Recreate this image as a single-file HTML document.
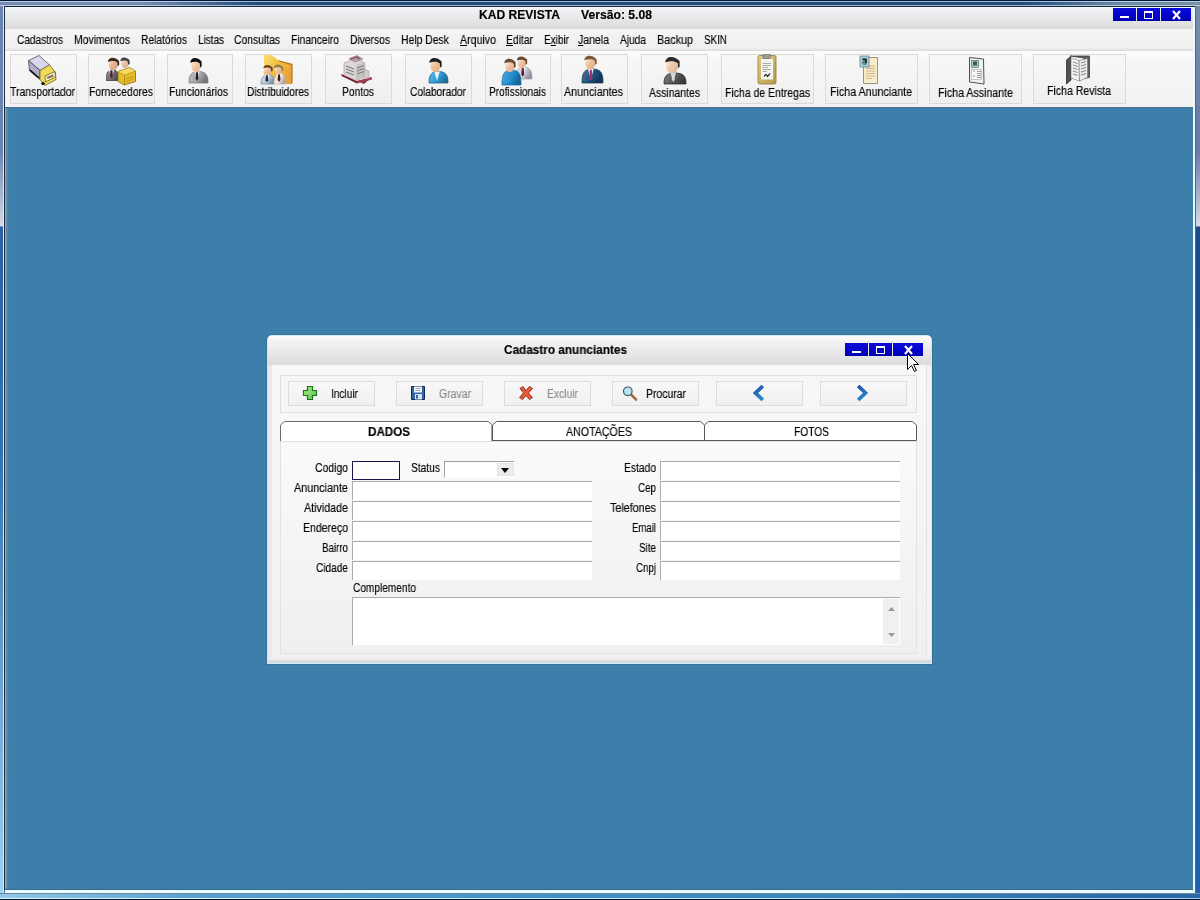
<!DOCTYPE html>
<html><head><meta charset="utf-8"><title>KAD REVISTA</title>
<style>
html,body{margin:0;padding:0;width:1200px;height:900px;overflow:hidden;position:relative;font-family:"Liberation Sans",sans-serif;}
.t{position:absolute;white-space:nowrap;transform-origin:0 0;will-change:transform;-webkit-text-stroke:0.15px currentColor;}
u{text-decoration:underline;text-underline-offset:1px;}
</style></head><body>
<div style="position:absolute;left:0px;top:0px;width:1200px;height:900px;background:#3d7fab;"></div>
<div style="position:absolute;left:0px;top:0px;width:3px;height:900px;background:linear-gradient(180deg,#6a84b0 0px,#6a84b0 150px,#d0d8e8 224px,#d0d8e8 226px,#2a62a2 227px,#3272b0 450px,#98d0f0 885px,#a8d8f4 900px);"></div>
<div style="position:absolute;left:1196px;top:0px;width:4px;height:900px;background:linear-gradient(180deg,#7890a8 0px,#6878a8 150px,#d0d8e8 224px,#d0d8e8 226px,#1a4a88 227px,#1e56a0 600px,#2262aa 900px);"></div>
<div style="position:absolute;left:0px;top:0px;width:1200px;height:7px;background:linear-gradient(90deg,#7a8cab 0px,#7a8cab 140px,#214a78 260px,#214a78 1020px,#6d8aa0 1120px,#7890a0 1200px);"></div>
<div style="position:absolute;left:0px;top:0px;width:1200px;height:1px;background:#04183a;"></div>
<div style="position:absolute;left:0px;top:1px;width:1200px;height:1px;background:rgba(200,225,255,0.75);"></div>
<div style="position:absolute;left:0px;top:5px;width:1200px;height:1px;background:rgba(200,225,255,0.75);"></div>
<div style="position:absolute;left:4px;top:6px;width:1192px;height:1px;background:#182838;"></div>
<div style="position:absolute;left:3px;top:6px;width:1px;height:888px;background:#d8ecf8;"></div>
<div style="position:absolute;left:4px;top:6px;width:1px;height:884px;background:#1c2c3c;"></div>
<div style="position:absolute;left:5px;top:108px;width:1px;height:781px;background:#90a8b8;"></div>
<div style="position:absolute;left:1193px;top:7px;width:2px;height:886px;background:#e8fcff;"></div>
<div style="position:absolute;left:1195px;top:6px;width:1px;height:888px;background:#506878;"></div>
<div style="position:absolute;left:0px;top:893px;width:1200px;height:1px;background:#6a8aa0;"></div>
<div style="position:absolute;left:0px;top:894px;width:1200px;height:4px;background:linear-gradient(90deg,#90c8e8 0px,#58a0d0 200px,#4090c4 600px,#3a80bc 900px,#2a68a8 1150px,#2a68a8 1200px);"></div>
<div style="position:absolute;left:0px;top:898px;width:1200px;height:1px;background:linear-gradient(90deg,#e0f4ff 0px,#c8ecff 600px,#a8d0f0 1200px);"></div>
<div style="position:absolute;left:0px;top:899px;width:1200px;height:1px;background:#021428;"></div>
<div style="position:absolute;left:5px;top:7px;width:1188px;height:22px;background:linear-gradient(180deg,#f6f9fc 0px,#eef0f2 3px,#e2e2e2 16px,#dadada 22px);"></div>
<div class="t" style="left:479.00px;top:8.84px;font-size:12px;line-height:12px;color:#000;font-weight:bold;transform:scaleX(1.0068);">KAD REVISTA</div>
<div class="t" style="left:581.00px;top:8.84px;font-size:12px;line-height:12px;color:#000;font-weight:bold;transform:scaleX(1.0135);">Versão: 5.08</div>
<div style="position:absolute;left:1113px;top:8px;width:23px;height:13px;background:linear-gradient(180deg,#0c0cd8 0%,#0606d0 45%,#0000b0 100%);"></div>
<div style="position:absolute;left:1120px;top:16px;width:9px;height:2px;background:#fff;"></div>
<div style="position:absolute;left:1137px;top:8px;width:23px;height:13px;background:linear-gradient(180deg,#0c0cd8 0%,#0606d0 45%,#0000b0 100%);"></div>
<div style="position:absolute;left:1144px;top:11px;width:9px;height:8px;border:1px solid #fff;border-top-width:2px;box-sizing:border-box;"></div>
<div style="position:absolute;left:1161px;top:8px;width:30px;height:13px;background:linear-gradient(180deg,#0c0cd8 0%,#0606d0 45%,#0000b0 100%);"></div>
<svg style="position:absolute;left:1172px;top:10px" width="9" height="10" viewBox="0 0 9 10"><path d="M1 1L8 9M8 1L1 9" stroke="#fff" stroke-width="2.1" stroke-linecap="butt"/></svg>
<div style="position:absolute;left:5px;top:29px;width:1188px;height:21px;background:linear-gradient(180deg,#f4f4f4,#eeeeee);"></div>
<div style="position:absolute;left:5px;top:49px;width:1188px;height:2px;background:linear-gradient(180deg,#e6e6e6,#dadada);"></div>
<div class="t" style="left:17.00px;top:33.84px;font-size:12px;line-height:12px;color:#000;transform:scaleX(0.8406);">Cadastros</div>
<div class="t" style="left:74.00px;top:33.84px;font-size:12px;line-height:12px;color:#000;transform:scaleX(0.8658);">Movimentos</div>
<div class="t" style="left:141.00px;top:33.84px;font-size:12px;line-height:12px;color:#000;transform:scaleX(0.8519);">Relatórios</div>
<div class="t" style="left:198.00px;top:33.84px;font-size:12px;line-height:12px;color:#000;transform:scaleX(0.8301);">Listas</div>
<div class="t" style="left:234.00px;top:33.84px;font-size:12px;line-height:12px;color:#000;transform:scaleX(0.8624);">Consultas</div>
<div class="t" style="left:291.00px;top:33.84px;font-size:12px;line-height:12px;color:#000;transform:scaleX(0.8565);">Financeiro</div>
<div class="t" style="left:350.00px;top:33.84px;font-size:12px;line-height:12px;color:#000;transform:scaleX(0.8569);">Diversos</div>
<div class="t" style="left:401.00px;top:33.84px;font-size:12px;line-height:12px;color:#000;transform:scaleX(0.8658);">Help Desk</div>
<div class="t" style="left:460.00px;top:33.84px;font-size:12px;line-height:12px;color:#000;transform:scaleX(0.8850);"><u>A</u>rquivo</div>
<div class="t" style="left:506.00px;top:33.84px;font-size:12px;line-height:12px;color:#000;transform:scaleX(0.8621);"><u>E</u>ditar</div>
<div class="t" style="left:544.00px;top:33.84px;font-size:12px;line-height:12px;color:#000;transform:scaleX(0.8333);">E<u>x</u>ibir</div>
<div class="t" style="left:578.00px;top:33.84px;font-size:12px;line-height:12px;color:#000;transform:scaleX(0.8757);"><u>J</u>anela</div>
<div class="t" style="left:620.00px;top:33.84px;font-size:12px;line-height:12px;color:#000;transform:scaleX(0.8464);">Ajuda</div>
<div class="t" style="left:657.00px;top:33.84px;font-size:12px;line-height:12px;color:#000;transform:scaleX(0.8996);">Backup</div>
<div class="t" style="left:704.00px;top:33.84px;font-size:12px;line-height:12px;color:#000;transform:scaleX(0.8208);">SKIN</div>
<div style="position:absolute;left:5px;top:51px;width:1188px;height:56px;background:linear-gradient(180deg,#fdfdfd 0px,#f6f6f6 10px,#f3f3f3 48px,#f2f2f6 56px);"></div>
<div style="position:absolute;left:5px;top:107px;width:1188px;height:1px;background:#4a6a88;"></div>
<div style="position:absolute;left:10px;top:54px;width:67px;height:50px;box-sizing:border-box;border:1px solid #dadada;background:linear-gradient(180deg,#f8f8f8,#efefef);"></div>
<div class="t" style="left:10.00px;top:85.84px;font-size:12px;line-height:12px;color:#000;transform:scaleX(0.8674);">Transportador</div>
<div style="position:absolute;left:88px;top:54px;width:67px;height:50px;box-sizing:border-box;border:1px solid #dadada;background:linear-gradient(180deg,#f8f8f8,#efefef);"></div>
<div class="t" style="left:89.00px;top:85.84px;font-size:12px;line-height:12px;color:#000;transform:scaleX(0.8644);">Fornecedores</div>
<div style="position:absolute;left:167px;top:54px;width:66px;height:50px;box-sizing:border-box;border:1px solid #dadada;background:linear-gradient(180deg,#f8f8f8,#efefef);"></div>
<div class="t" style="left:169.00px;top:85.84px;font-size:12px;line-height:12px;color:#000;transform:scaleX(0.8588);">Funcionários</div>
<div style="position:absolute;left:245px;top:54px;width:67px;height:50px;box-sizing:border-box;border:1px solid #dadada;background:linear-gradient(180deg,#f8f8f8,#efefef);"></div>
<div class="t" style="left:247.00px;top:85.84px;font-size:12px;line-height:12px;color:#000;transform:scaleX(0.8449);">Distribuidores</div>
<div style="position:absolute;left:325px;top:54px;width:67px;height:50px;box-sizing:border-box;border:1px solid #dadada;background:linear-gradient(180deg,#f8f8f8,#efefef);"></div>
<div class="t" style="left:342.00px;top:85.84px;font-size:12px;line-height:12px;color:#000;transform:scaleX(0.8561);">Pontos</div>
<div style="position:absolute;left:405px;top:54px;width:67px;height:50px;box-sizing:border-box;border:1px solid #dadada;background:linear-gradient(180deg,#f8f8f8,#efefef);"></div>
<div class="t" style="left:410.00px;top:85.84px;font-size:12px;line-height:12px;color:#000;transform:scaleX(0.8477);">Colaborador</div>
<div style="position:absolute;left:485px;top:54px;width:66px;height:50px;box-sizing:border-box;border:1px solid #dadada;background:linear-gradient(180deg,#f8f8f8,#efefef);"></div>
<div class="t" style="left:489.00px;top:85.84px;font-size:12px;line-height:12px;color:#000;transform:scaleX(0.8377);">Profissionais</div>
<div style="position:absolute;left:561px;top:54px;width:67px;height:50px;box-sizing:border-box;border:1px solid #dadada;background:linear-gradient(180deg,#f8f8f8,#efefef);"></div>
<div class="t" style="left:564.00px;top:85.84px;font-size:12px;line-height:12px;color:#000;transform:scaleX(0.8931);">Anunciantes</div>
<div style="position:absolute;left:641px;top:54px;width:67px;height:50px;box-sizing:border-box;border:1px solid #dadada;background:linear-gradient(180deg,#f8f8f8,#efefef);"></div>
<div class="t" style="left:649.00px;top:86.84px;font-size:12px;line-height:12px;color:#000;transform:scaleX(0.8691);">Assinantes</div>
<div style="position:absolute;left:721px;top:54px;width:93px;height:50px;box-sizing:border-box;border:1px solid #dadada;background:linear-gradient(180deg,#f8f8f8,#efefef);"></div>
<div class="t" style="left:725.00px;top:86.84px;font-size:12px;line-height:12px;color:#000;transform:scaleX(0.8729);">Ficha de Entregas</div>
<div style="position:absolute;left:825px;top:54px;width:93px;height:50px;box-sizing:border-box;border:1px solid #dadada;background:linear-gradient(180deg,#f8f8f8,#efefef);"></div>
<div class="t" style="left:830.00px;top:85.84px;font-size:12px;line-height:12px;color:#000;transform:scaleX(0.8909);">Ficha Anunciante</div>
<div style="position:absolute;left:929px;top:54px;width:93px;height:50px;box-sizing:border-box;border:1px solid #dadada;background:linear-gradient(180deg,#f8f8f8,#efefef);"></div>
<div class="t" style="left:938.00px;top:86.84px;font-size:12px;line-height:12px;color:#000;transform:scaleX(0.8853);">Ficha Assinante</div>
<div style="position:absolute;left:1033px;top:54px;width:93px;height:50px;box-sizing:border-box;border:1px solid #dadada;background:linear-gradient(180deg,#f8f8f8,#efefef);"></div>
<div class="t" style="left:1047.00px;top:84.84px;font-size:12px;line-height:12px;color:#000;transform:scaleX(0.8801);">Ficha Revista</div>
<svg style="position:absolute;left:24px;top:52px" width="36" height="36" viewBox="0 0 36 36">
<path d="M4.5 8.5 L15 3.5 L25.5 13 L16 18.5 Z" fill="#d8d8ea" stroke="#505060" stroke-width="0.8"/>
<path d="M4.5 8.5 L16 18.5 L16 27.5 L5.5 19 Z" fill="#b0b0c8" stroke="#404050" stroke-width="0.8"/>
<path d="M16 18.5 L25.5 13 L31.5 20.5 L32 27.5 L21 33.5 L16 27.5 Z" fill="#f0dc58" stroke="#706020" stroke-width="0.8"/>
<path d="M21 24 L31 19.5 L31.5 25 L21.5 30 Z" fill="#f4f0c0" stroke="#604820" stroke-width="0.7"/>
<path d="M23 25 L29 22.5 L29.5 24.5 L23.5 27 Z" fill="#806860"/>
<path d="M6 18 L15 26" stroke="#101010" stroke-width="1.6"/>
<ellipse cx="19" cy="31.5" rx="1.8" ry="1.5" fill="#101010"/>
</svg>
<svg style="position:absolute;left:106px;top:52px" width="36" height="36" viewBox="0 0 36 36"><defs><linearGradient id="fg1" x1="0" y1="0" x2="1" y2="1"><stop offset="0" stop-color="#fbf6f0"/><stop offset="0.45" stop-color="#e9b395"/><stop offset="1" stop-color="#d09e81"/></linearGradient><linearGradient id="bg1" x1="0" y1="0" x2="1" y2="0.4"><stop offset="0" stop-color="#93938d"/><stop offset="0.6" stop-color="#707068"/><stop offset="1" stop-color="#4e4e48"/></linearGradient></defs><path d="M0 28.5 C-0.3 20.5 3 17.5 6.5 17.5 C10 17.5 13.3 20.5 13 28.5 Z" fill="url(#bg1)" stroke="#303030" stroke-width="0.7"/><path d="M2.66 17.5 L5.46 26.3 L8.26 17.5 Z" fill="#f0f0f0"/><path d="M4.46 18.3 L6.46 18.3 L6.859999999999999 24.1 L5.46 26.52 L4.0600000000000005 24.1 Z" fill="#4a1a40"/><ellipse cx="7.3" cy="12.54" rx="4.699999999999999" ry="5.72" fill="url(#fg1)"/><path d="M1.9 9.940000000000001 C1.7 5.26 8.5 3.8 13.1 8.9 L13.2 13.06 L11.7 14.36 L11.3 10.46 C8.5 8.379999999999999 5.0 8.9 1.9 9.940000000000001 Z" fill="#3a2a20"/><defs><linearGradient id="fg2" x1="0" y1="0" x2="1" y2="1"><stop offset="0" stop-color="#fbf6f0"/><stop offset="0.45" stop-color="#e9c3a4"/><stop offset="1" stop-color="#d0ac90"/></linearGradient><linearGradient id="bg2" x1="0" y1="0" x2="1" y2="0.4"><stop offset="0" stop-color="#a7a79f"/><stop offset="0.6" stop-color="#8a8a80"/><stop offset="1" stop-color="#606059"/></linearGradient></defs><ellipse cx="18.84" cy="11.379999999999999" rx="3.76" ry="4.84" fill="url(#fg2)"/><path d="M14.4 9.18 C14.2 5.22 19.8 3.8 23.6 8.3 L23.7 11.82 L22.2 12.92 L21.8 9.620000000000001 C19.8 7.86 17.0 8.3 14.4 9.18 Z" fill="#404040"/><path d="M12 19.5 L23.5 15.5 L29.5 19 L29.5 29.5 L18.5 33 L12 29.5 Z" fill="#e6bc28" stroke="#8a6a10" stroke-width="0.8"/><path d="M12 19.5 L18.5 23 L29.5 19 M18.5 23 V33" stroke="#a88418" stroke-width="0.8" fill="none"/><path d="M12.3 19.7 L23.5 15.8 L29.2 19 L18.5 22.8 Z" fill="#f4d860"/><path d="M20 27 L27.5 24.5 M20 29.5 L27.5 27" stroke="#b89020" stroke-width="0.8"/></svg>
<svg style="position:absolute;left:180px;top:52px" width="36" height="36" viewBox="0 0 36 36"><defs><linearGradient id="fg3" x1="0" y1="0" x2="1" y2="1"><stop offset="0" stop-color="#fbf6f0"/><stop offset="0.45" stop-color="#f4caa4"/><stop offset="1" stop-color="#dbb490"/></linearGradient><linearGradient id="bg3" x1="0" y1="0" x2="1" y2="0.4"><stop offset="0" stop-color="#bdbdbd"/><stop offset="0.6" stop-color="#a8a8a8"/><stop offset="1" stop-color="#757575"/></linearGradient></defs><path d="M9 31.0 C8.7 22.5 12 19.5 18.5 19.5 C25 19.5 28.3 22.5 28 31.0 Z" fill="url(#bg3)" stroke="#707070" stroke-width="0.7"/><path d="M14.18 19.5 L16.98 28.700000000000003 L19.78 19.5 Z" fill="#e8e8f0"/><path d="M15.98 20.3 L17.98 20.3 L18.38 26.4 L16.98 28.93 L15.58 26.4 Z" fill="#202030"/><ellipse cx="15.8" cy="13.7" rx="4.699999999999999" ry="6.6" fill="url(#fg3)"/><path d="M10.4 10.7 C10.2 5.3 17.0 3.8 21.6 9.5 L21.7 14.3 L20.2 15.799999999999999 L19.8 11.3 C17.0 8.9 13.5 9.5 10.4 10.7 Z" fill="#101010"/></svg>
<svg style="position:absolute;left:258px;top:52px" width="36" height="36" viewBox="0 0 36 36">
<defs><linearGradient id="foldg" x1="0" y1="0" x2="1" y2="0.6"><stop offset="0" stop-color="#fae070"/><stop offset="0.5" stop-color="#f2c040"/><stop offset="1" stop-color="#e8a030"/></linearGradient></defs>
<path d="M6 3 L13 3 L21 8.5 L34 12 L34 32 L6 32 Z" fill="url(#foldg)"/>
<path d="M21 9 L34 12.5 L34 31.5" fill="none" stroke="#a87018" stroke-width="1.1"/>
<defs><linearGradient id="fg4" x1="0" y1="0" x2="1" y2="1"><stop offset="0" stop-color="#fbf6f0"/><stop offset="0.45" stop-color="#f0c39d"/><stop offset="1" stop-color="#d8ac88"/></linearGradient><linearGradient id="bg4" x1="0" y1="0" x2="1" y2="0.4"><stop offset="0" stop-color="#c9d8e7"/><stop offset="0.6" stop-color="#b8cce0"/><stop offset="1" stop-color="#808e9c"/></linearGradient></defs><path d="M3 32.0 C2.7 25.5 6 22.5 10.0 22.5 C14 22.5 17.3 25.5 17 32.0 Z" fill="url(#bg4)" stroke="#7888a0" stroke-width="0.7"/><path d="M6.079999999999999 22.5 L8.879999999999999 30.1 L11.68 22.5 Z" fill="#f0f0f0"/><path d="M7.879999999999999 23.3 L9.879999999999999 23.3 L10.28 28.2 L8.879999999999999 30.29 L7.479999999999999 28.2 Z" fill="#203040"/><ellipse cx="9.84" cy="18.3" rx="3.76" ry="4.4" fill="url(#fg4)"/><path d="M5.4 16.3 C5.2 12.7 10.8 11.3 14.6 15.5 L14.7 18.7 L13.2 19.7 L12.8 16.7 C10.8 15.1 8.0 15.5 5.4 16.3 Z" fill="#6a4020"/><defs><linearGradient id="fg5" x1="0" y1="0" x2="1" y2="1"><stop offset="0" stop-color="#fbf6f0"/><stop offset="0.45" stop-color="#f0c39d"/><stop offset="1" stop-color="#d8ac88"/></linearGradient><linearGradient id="bg5" x1="0" y1="0" x2="1" y2="0.4"><stop offset="0" stop-color="#f6eae4"/><stop offset="0.6" stop-color="#f4e4dc"/><stop offset="1" stop-color="#aa9f9a"/></linearGradient></defs><path d="M16 32.0 C15.7 24.5 19 21.5 22.0 21.5 C25 21.5 28.3 24.5 28 32.0 Z" fill="url(#bg5)" stroke="#c8b0a8" stroke-width="0.7"/><path d="M18.24 21.5 L21.04 29.9 L23.84 21.5 Z" fill="#ffffff"/><path d="M20.04 22.3 L22.04 22.3 L22.439999999999998 27.8 L21.04 30.11 L19.64 27.8 Z" fill="#302020"/><ellipse cx="20.34" cy="18.09" rx="3.76" ry="4.62" fill="url(#fg5)"/><path d="M15.9 15.99 C15.7 12.21 21.3 10.8 25.1 15.15 L25.2 18.509999999999998 L23.7 19.56 L23.3 16.41 C21.3 14.73 18.5 15.15 15.9 15.99 Z" fill="#9a7850"/></svg>
<svg style="position:absolute;left:338px;top:52px" width="36" height="36" viewBox="0 0 36 36">
<path d="M3 22 L19 29 L34 25 L26 32 Z" fill="#8a3040"/>
<path d="M3.5 22 L19 29 L19 31.5 L3.5 24 Z" fill="#702030"/>
<path d="M19 29 L34 25.5 L34 27.5 L19 31.5 Z" fill="#a04050"/>
<path d="M6 11 L17 6 L27 11 L27 25 L18 28.5 L6 23 Z" fill="#ded6d6" stroke="#a89098" stroke-width="0.6"/>
<path d="M18 13 L27 10 L27 25 L18 28.5 Z" fill="#c8c2c2"/>
<path d="M11 6.5 L19 3.5 L25 7 L17 10 Z" fill="#b8a0a8" stroke="#8a6a78" stroke-width="0.5"/>
<path d="M12 7.5 L19 5 L22 7" stroke="#7a4a58" stroke-width="1.2" fill="none"/>
<path d="M8 14 L16 17 M8 17 L16 20 M8 20 L16 23 M19 16 L26 13.5 M19 19 L26 16.5 M19 22 L26 19.5" stroke="#7a8080" stroke-width="1.1"/>
<path d="M26 17 L31 19 L31 26 L26 27 Z" fill="#d0caca" stroke="#a89098" stroke-width="0.5"/>
</svg>
<svg style="position:absolute;left:420px;top:52px" width="36" height="36" viewBox="0 0 36 36"><defs><linearGradient id="fg6" x1="0" y1="0" x2="1" y2="1"><stop offset="0" stop-color="#fbf6f0"/><stop offset="0.45" stop-color="#f2c395"/><stop offset="1" stop-color="#d9ac81"/></linearGradient><linearGradient id="bg6" x1="0" y1="0" x2="1" y2="0.4"><stop offset="0" stop-color="#5fb7e4"/><stop offset="0.6" stop-color="#2aa0dc"/><stop offset="1" stop-color="#1d709a"/></linearGradient></defs><path d="M9 31.0 C8.7 22.5 12 19.5 18.5 19.5 C25 19.5 28.3 22.5 28 31.0 Z" fill="url(#bg6)" stroke="#1a5080" stroke-width="0.7"/><path d="M14.18 19.5 L16.98 28.700000000000003 L19.78 19.5 Z" fill="#f0f0f0"/><ellipse cx="15.28" cy="13.7" rx="5.17" ry="6.6" fill="url(#fg6)"/><path d="M9.4 10.7 C9.2 5.3 16.6 3.8 21.6 9.5 L21.7 14.3 L20.2 15.799999999999999 L19.8 11.3 C16.6 8.9 12.75 9.5 9.4 10.7 Z" fill="#202020"/></svg>
<svg style="position:absolute;left:498px;top:52px" width="36" height="36" viewBox="0 0 36 36"><defs><linearGradient id="fg7" x1="0" y1="0" x2="1" y2="1"><stop offset="0" stop-color="#fbf6f0"/><stop offset="0.45" stop-color="#f0c3a4"/><stop offset="1" stop-color="#d8ac90"/></linearGradient><linearGradient id="bg7" x1="0" y1="0" x2="1" y2="0.4"><stop offset="0" stop-color="#dbdbe7"/><stop offset="0.6" stop-color="#d0d0e0"/><stop offset="1" stop-color="#91919c"/></linearGradient></defs><path d="M18 27 C17.7 18 21 15 26.0 15 C31 15 34.3 18 34 27 Z" fill="url(#bg7)" stroke="#a0a0b0" stroke-width="0.7"/><path d="M21.919999999999998 15 L24.72 24.6 L27.52 15 Z" fill="#f8f8f8"/><path d="M23.72 15.8 L25.72 15.8 L26.119999999999997 22.2 L24.72 24.84 L23.32 22.2 Z" fill="#6a1a30"/><ellipse cx="23.82" cy="10.959999999999999" rx="4.2299999999999995" ry="5.28" fill="url(#fg7)"/><path d="M18.9 8.56 C18.7 4.24 24.9 2.8 29.1 7.6 L29.2 11.44 L27.7 12.64 L27.3 9.04 C24.9 7.12 21.75 7.6 18.9 8.56 Z" fill="#6a4a30"/><defs><linearGradient id="fg8" x1="0" y1="0" x2="1" y2="1"><stop offset="0" stop-color="#fbf6f0"/><stop offset="0.45" stop-color="#f0c3a4"/><stop offset="1" stop-color="#d8ac90"/></linearGradient><linearGradient id="bg8" x1="0" y1="0" x2="1" y2="0.4"><stop offset="0" stop-color="#57abdb"/><stop offset="0.6" stop-color="#2090d0"/><stop offset="1" stop-color="#166491"/></linearGradient></defs><path d="M4 33 C3.7 21 7 18 13.5 18 C20 18 23.3 21 23 33 Z" fill="url(#bg8)" stroke="#1a60a0" stroke-width="0.7"/><path d="M9.18 18 L11.98 30.0 L14.780000000000001 18 Z" fill="#2a90d0"/><ellipse cx="11.8" cy="14.12" rx="4.699999999999999" ry="6.16" fill="url(#fg8)"/><path d="M6.4 11.32 C6.2 6.28 13.0 4.8 17.6 10.2 L17.7 14.68 L16.2 16.08 L15.8 11.879999999999999 C13.0 9.64 9.5 10.2 6.4 11.32 Z" fill="#6a4a30"/></svg>
<svg style="position:absolute;left:576px;top:52px" width="36" height="36" viewBox="0 0 36 36"><defs><linearGradient id="fg9" x1="0" y1="0" x2="1" y2="1"><stop offset="0" stop-color="#fbf6f0"/><stop offset="0.45" stop-color="#f0c39d"/><stop offset="1" stop-color="#d8ac88"/></linearGradient><linearGradient id="bg9" x1="0" y1="0" x2="1" y2="0.4"><stop offset="0" stop-color="#567a9f"/><stop offset="0.6" stop-color="#1e4e80"/><stop offset="1" stop-color="#153659"/></linearGradient></defs><path d="M6 31 C5.7 20 9 17 16.5 17 C24 17 27.3 20 27 31 Z" fill="url(#bg9)" stroke="#10304a" stroke-width="0.7"/><path d="M12.02 17 L14.82 28.200000000000003 L17.62 17 Z" fill="#f0f0f0"/><path d="M13.82 17.8 L15.82 17.8 L16.22 25.4 L14.82 28.479999999999997 L13.42 25.4 Z" fill="#a03070"/><ellipse cx="14.28" cy="11.12" rx="5.17" ry="6.16" fill="url(#fg9)"/><path d="M8.4 8.32 C8.2 3.2800000000000002 15.6 1.8 20.6 7.2 L20.7 11.68 L19.2 13.08 L18.8 8.879999999999999 C15.6 6.640000000000001 11.75 7.2 8.4 8.32 Z" fill="#7a5a38"/></svg>
<svg style="position:absolute;left:656px;top:52px" width="36" height="36" viewBox="0 0 36 36"><defs><linearGradient id="fg10" x1="0" y1="0" x2="1" y2="1"><stop offset="0" stop-color="#fbf6f0"/><stop offset="0.45" stop-color="#f0caac"/><stop offset="1" stop-color="#d8b497"/></linearGradient><linearGradient id="bg10" x1="0" y1="0" x2="1" y2="0.4"><stop offset="0" stop-color="#818181"/><stop offset="0.6" stop-color="#585858"/><stop offset="1" stop-color="#3d3d3d"/></linearGradient></defs><path d="M8 32 C7.7 24 11 21 19.0 21 C27 21 30.3 24 30 32 Z" fill="url(#bg10)" stroke="#202020" stroke-width="0.7"/><path d="M14.440000000000001 21 L17.240000000000002 29.8 L20.040000000000003 21 Z" fill="#d8d8e0"/><path d="M16.240000000000002 21.8 L18.240000000000002 21.8 L18.64 27.6 L17.240000000000002 30.02 L15.840000000000002 27.6 Z" fill="#d8d8e0"/><ellipse cx="16.240000000000002" cy="13.86" rx="6.109999999999999" ry="7.48" fill="url(#fg10)"/><path d="M9.4 10.46 C9.2 4.34 17.8 2.8 23.6 9.1 L23.7 14.54 L22.2 16.240000000000002 L21.8 11.14 C17.8 8.42 13.25 9.1 9.4 10.46 Z" fill="#2a2a2a"/></svg>
<svg style="position:absolute;left:750px;top:50px" width="36" height="36" viewBox="0 0 36 36">
<defs><linearGradient id="clipg" x1="0" y1="0" x2="1" y2="1"><stop offset="0" stop-color="#e0d088"/><stop offset="1" stop-color="#b89848"/></linearGradient></defs>
<rect x="8" y="5.5" width="18" height="28.5" rx="1.5" fill="url(#clipg)" stroke="#8a7838" stroke-width="0.8"/>
<rect x="11" y="9" width="12" height="20.5" fill="#f4f4f0"/>
<rect x="13" y="4.5" width="7" height="4" fill="#9a9a9a" stroke="#606060" stroke-width="0.5"/>
<path d="M12.5 13.5 H21 M12.5 15.5 H21 M12.5 17.5 H18 M12.5 19.5 H21 M12.5 21.5 H17" stroke="#888" stroke-width="0.7"/>
<path d="M14 26.5 L16 24.5 L17.5 26.5 L20 23.5" stroke="#303030" stroke-width="1.2" fill="none"/>
</svg>
<svg style="position:absolute;left:852px;top:50px" width="36" height="36" viewBox="0 0 36 36">
<path d="M11.5 7.5 H25.5 V33.5 H11.5 Z" fill="#f6eccc" stroke="#908878" stroke-width="0.9"/>
<path d="M14 16 H23 M14 18.5 H23 M14 21 H23 M14 23.5 H23 M14 26 H23 M14 28.5 H20" stroke="#d0b080" stroke-width="0.9"/>
<rect x="8" y="6" width="9" height="11" fill="#a8ccd4" stroke="#6a8890" stroke-width="0.8"/>
<circle cx="12.5" cy="12.5" r="2.5" fill="#5a8890"/>
<path d="M10.5 9.2 H14 V13" stroke="#101820" stroke-width="1.5" fill="none"/>
</svg>
<svg style="position:absolute;left:958px;top:50px" width="36" height="36" viewBox="0 0 36 36">
<path d="M11.5 7.5 L25.5 9 L26 34 L11.5 32 Z" fill="#eef2f2" stroke="#4a5050" stroke-width="1"/>
<rect x="13.5" y="10.5" width="7" height="7" fill="#a8c8c8" stroke="#506868" stroke-width="0.6"/>
<rect x="15" y="11.5" width="4" height="4" fill="#405858"/>
<rect x="13.5" y="19.5" width="10" height="10" fill="#f8f8f8" stroke="#909898" stroke-width="0.5"/>
<path d="M19 21.5 H23 M19 23.5 H23 M19 25.5 H23 M19 27.5 H23 M15 21 H17 M15 26 H17" stroke="#8a9090" stroke-width="0.9"/>
</svg>
<svg style="position:absolute;left:1062px;top:50px" width="36" height="36" viewBox="0 0 36 36">
<path d="M8 6 H27.5 V27.5 L22 28.5 V8 Z" fill="#606060" stroke="#404040" stroke-width="0.8"/>
<path d="M4.5 10 L8.5 6.5 L9 30 L4.5 34 Z" fill="#505050" stroke="#303030" stroke-width="0.8"/>
<path d="M9 8 L17 10.5 L17.5 31 L9 28 Z" fill="#f4f4f4" stroke="#707070" stroke-width="0.6"/>
<path d="M17 10.5 L25.5 8.5 L25.5 27.5 L17.5 31 Z" fill="#ececec" stroke="#707070" stroke-width="0.6"/>
<path d="M11 12 L15.5 13.5 M11 15 L15.5 16.5 M11 18 L15.5 19.5 M11 21 L15.5 22.5 M11 24 L15.5 25.5 M19 13 L24 11.5 M19 16 L24 14.5 M19 19 L24 17.5 M19 22 L24 20.5 M19 25 L24 23.5" stroke="#909090" stroke-width="1.1"/>
</svg>
<div style="position:absolute;left:6px;top:108px;width:1187px;height:781px;background:linear-gradient(90deg,#6a8ca8 0px,#3d7fab 3px);"></div>
<div style="position:absolute;left:5px;top:889px;width:1188px;height:1px;background:#3a6a88;"></div>
<div style="position:absolute;left:5px;top:890px;width:1190px;height:3px;background:#e8fcff;"></div>
<div style="position:absolute;left:267px;top:335px;width:665px;height:329px;border-radius:5px 5px 0 0;background:#c8ecf8;box-shadow:0 0 0 1px rgba(40,70,90,0.22);"></div>
<div style="position:absolute;left:268px;top:336px;width:663px;height:327px;border-radius:4px 4px 0 0;background:#f0f0f0;"></div>
<div style="position:absolute;left:268px;top:336px;width:663px;height:29px;border-radius:4px 4px 0 0;background:linear-gradient(180deg,#fbfdff 0px,#f2f2f2 6px,#e4e4e4 20px,#dcdcdc 28px);"></div>
<div style="position:absolute;left:268px;top:365px;width:663px;height:298px;background:linear-gradient(180deg,#f8f8f8,#f0f0f0);"></div>
<div style="position:absolute;left:268px;top:365px;width:4px;height:298px;background:#f6f4f4;"></div>
<div style="position:absolute;left:268px;top:365px;width:1px;height:298px;background:#e2eaf0;"></div>
<div style="position:absolute;left:269px;top:365px;width:3px;height:298px;background:#ede9e9;"></div>
<div style="position:absolute;left:926px;top:365px;width:1px;height:292px;background:#e4e4e4;"></div>
<div style="position:absolute;left:927px;top:365px;width:4px;height:298px;background:#f4f4f4;"></div>
<div style="position:absolute;left:268px;top:657px;width:663px;height:3px;background:#eeeeee;"></div>
<div style="position:absolute;left:268px;top:660px;width:663px;height:3px;background:#d8dadd;"></div>
<div class="t" style="left:504.00px;top:343.84px;font-size:12px;line-height:12px;color:#000;font-weight:bold;transform:scaleX(0.9809);">Cadastro anunciantes</div>
<div style="position:absolute;left:845px;top:343px;width:23px;height:13px;background:linear-gradient(180deg,#0c0cd8 0%,#0606d0 45%,#0000b0 100%);"></div>
<div style="position:absolute;left:852px;top:351px;width:9px;height:2px;background:#fff;"></div>
<div style="position:absolute;left:869px;top:343px;width:23px;height:13px;background:linear-gradient(180deg,#0c0cd8 0%,#0606d0 45%,#0000b0 100%);"></div>
<div style="position:absolute;left:876px;top:346px;width:9px;height:8px;border:1px solid #fff;border-top-width:2px;box-sizing:border-box;"></div>
<div style="position:absolute;left:893px;top:343px;width:30px;height:13px;background:linear-gradient(180deg,#0c0cd8 0%,#0606d0 45%,#0000b0 100%);"></div>
<svg style="position:absolute;left:904px;top:345px" width="9" height="10" viewBox="0 0 9 10"><path d="M1 1L8 9M8 1L1 9" stroke="#fff" stroke-width="2.1" stroke-linecap="butt"/></svg>
<div style="position:absolute;left:280px;top:375px;width:637px;height:38px;box-sizing:border-box;border:1px solid #dedede;background:#f6f6f6;"></div>
<div style="position:absolute;left:288px;top:381px;width:87px;height:25px;box-sizing:border-box;border:1px solid #dcdcdc;background:linear-gradient(180deg,#f8f8f8,#f0f0f0);"></div>
<div style="position:absolute;left:396px;top:381px;width:87px;height:25px;box-sizing:border-box;border:1px solid #dcdcdc;background:linear-gradient(180deg,#f8f8f8,#f0f0f0);"></div>
<div style="position:absolute;left:504px;top:381px;width:87px;height:25px;box-sizing:border-box;border:1px solid #dcdcdc;background:linear-gradient(180deg,#f8f8f8,#f0f0f0);"></div>
<div style="position:absolute;left:612px;top:381px;width:87px;height:25px;box-sizing:border-box;border:1px solid #dcdcdc;background:linear-gradient(180deg,#f8f8f8,#f0f0f0);"></div>
<div style="position:absolute;left:716px;top:381px;width:87px;height:25px;box-sizing:border-box;border:1px solid #dcdcdc;background:linear-gradient(180deg,#f8f8f8,#f0f0f0);"></div>
<div style="position:absolute;left:820px;top:381px;width:87px;height:25px;box-sizing:border-box;border:1px solid #dcdcdc;background:linear-gradient(180deg,#f8f8f8,#f0f0f0);"></div>
<svg style="position:absolute;left:298px;top:382px" width="24" height="22" viewBox="0 0 24 22"><defs><linearGradient id="plg" x1="0" y1="0" x2="1" y2="1"><stop offset="0" stop-color="#a8f090"/><stop offset="1" stop-color="#58c048"/></linearGradient></defs><path d="M9.5 4.5 H14.5 V8.5 H18.5 V13.5 H14.5 V17.5 H9.5 V13.5 H5.5 V8.5 H9.5 Z" fill="url(#plg)" stroke="#247024" stroke-width="1.2"/></svg>
<svg style="position:absolute;left:406px;top:382px" width="24" height="22" viewBox="0 0 24 22"><path d="M5.5 4.5 H18.5 V17.5 H5.5 Z" fill="#3464a8" stroke="#102850" stroke-width="1"/><rect x="8" y="4.5" width="8" height="6" fill="#f0f4ff"/><path d="M9.5 6.5 H14.5 M9.5 8.5 H14.5" stroke="#909090" stroke-width="0.8"/><rect x="9" y="12" width="7" height="5.5" fill="#d8e4f8"/><rect x="10" y="13" width="2" height="3.5" fill="#3464a8"/></svg>
<svg style="position:absolute;left:514px;top:382px" width="24" height="22" viewBox="0 0 24 22"><path d="M6 6.5 L9 4.5 L12 8.5 L15.5 4.5 L18.5 6.5 L14.5 11 L18.5 15.5 L15.5 17.5 L12 13.5 L8.5 17.5 L5.5 15.5 L9.5 11 Z" fill="#e85a3a" stroke="#8a2a1a" stroke-width="0.9"/></svg>
<svg style="position:absolute;left:618px;top:381px" width="24" height="22" viewBox="0 0 24 22"><line x1="13.5" y1="14" x2="18" y2="18.5" stroke="#a07040" stroke-width="2.6" stroke-linecap="round"/><circle cx="9.8" cy="10.3" r="4.3" fill="#b8e4f4" stroke="#405860" stroke-width="1.2"/></svg>
<svg style="position:absolute;left:749px;top:382px" width="24" height="22" viewBox="0 0 24 22"><defs><linearGradient id="chv1" x1="0" y1="0" x2="0.3" y2="1"><stop offset="0" stop-color="#2050a8"/><stop offset="1" stop-color="#2a86cc"/></linearGradient></defs><path d="M13.8 4 L6.5 11 L13.8 18" fill="none" stroke="url(#chv1)" stroke-width="3.8"/></svg>
<svg style="position:absolute;left:848px;top:382px" width="24" height="22" viewBox="0 0 24 22"><defs><linearGradient id="chv2" x1="0" y1="0" x2="0.3" y2="1"><stop offset="0" stop-color="#2050a8"/><stop offset="1" stop-color="#2a86cc"/></linearGradient></defs><path d="M10.2 4 L17.5 11 L10.2 18" fill="none" stroke="url(#chv2)" stroke-width="3.8"/></svg>
<div class="t" style="left:331.00px;top:387.84px;font-size:12px;line-height:12px;color:#000;transform:scaleX(0.8427);">Incluir</div>
<div class="t" style="left:439.00px;top:387.84px;font-size:12px;line-height:12px;color:#8c8c8c;transform:scaleX(0.8729);">Gravar</div>
<div class="t" style="left:547.00px;top:387.84px;font-size:12px;line-height:12px;color:#8c8c8c;transform:scaleX(0.8611);">Excluir</div>
<div class="t" style="left:646.00px;top:387.84px;font-size:12px;line-height:12px;color:#000;transform:scaleX(0.8692);">Procurar</div>
<svg style="position:absolute;left:0;top:0" width="1200" height="900">
<path d="M280.5 441 V425 L284.5 421.5 H488.5 L491.5 424.5 V441" fill="#fff" stroke="#6a6a6a" stroke-width="1"/>
<path d="M491.5 425 V441" stroke="#a0a0a0"/>
<path d="M492.5 440.5 V425 L496.5 421.5 H700.5 L704.5 425 V440.5 H492" fill="#fff" stroke="#5a5a5a"/>
<path d="M704.5 440.5 V425 L708.5 421.5 H912.5 L916.5 425 V440.5 H704" fill="#fff" stroke="#5a5a5a"/>
</svg>
<div style="position:absolute;left:280px;top:441px;width:637px;height:213px;box-sizing:border-box;border:1px solid #e2e2e2;background:linear-gradient(180deg,#fafafa,#efefef);"></div>
<div class="t" style="left:368.00px;top:425.84px;font-size:12px;line-height:12px;color:#000;font-weight:bold;transform:scaleX(0.9695);">DADOS</div>
<div class="t" style="left:566.00px;top:425.84px;font-size:12px;line-height:12px;color:#000;transform:scaleX(0.8864);">ANOTAÇÕES</div>
<div class="t" style="left:794.00px;top:425.84px;font-size:12px;line-height:12px;color:#000;transform:scaleX(0.8516);">FOTOS</div>
<div class="t" style="left:315.00px;top:461.84px;font-size:12px;line-height:12px;color:#000;transform:scaleX(0.8675);">Codigo</div>
<div class="t" style="left:294.00px;top:481.84px;font-size:12px;line-height:12px;color:#000;transform:scaleX(0.8991);">Anunciante</div>
<div class="t" style="left:304.00px;top:501.84px;font-size:12px;line-height:12px;color:#000;transform:scaleX(0.8910);">Atividade</div>
<div class="t" style="left:303.00px;top:521.84px;font-size:12px;line-height:12px;color:#000;transform:scaleX(0.8762);">Endereço</div>
<div class="t" style="left:322.00px;top:541.84px;font-size:12px;line-height:12px;color:#000;transform:scaleX(0.8115);">Bairro</div>
<div class="t" style="left:316.00px;top:561.84px;font-size:12px;line-height:12px;color:#000;transform:scaleX(0.8412);">Cidade</div>
<div class="t" style="left:624.00px;top:461.84px;font-size:12px;line-height:12px;color:#000;transform:scaleX(0.8561);">Estado</div>
<div class="t" style="left:638.00px;top:481.84px;font-size:12px;line-height:12px;color:#000;transform:scaleX(0.8174);">Cep</div>
<div class="t" style="left:610.00px;top:501.84px;font-size:12px;line-height:12px;color:#000;transform:scaleX(0.8956);">Telefones</div>
<div class="t" style="left:632.00px;top:521.84px;font-size:12px;line-height:12px;color:#000;transform:scaleX(0.8000);">Email</div>
<div class="t" style="left:639.00px;top:541.84px;font-size:12px;line-height:12px;color:#000;transform:scaleX(0.8213);">Site</div>
<div class="t" style="left:636.00px;top:561.84px;font-size:12px;line-height:12px;color:#000;transform:scaleX(0.8110);">Cnpj</div>
<div class="t" style="left:411.00px;top:461.84px;font-size:12px;line-height:12px;color:#000;transform:scaleX(0.8524);">Status</div>
<div class="t" style="left:353.00px;top:581.84px;font-size:12px;line-height:12px;color:#000;transform:scaleX(0.8434);">Complemento</div>
<div style="position:absolute;left:352px;top:461px;width:48px;height:19px;box-sizing:border-box;border:1px solid #181848;background:#fff;"></div>
<div style="position:absolute;left:444px;top:461px;width:70px;height:16px;box-sizing:border-box;border-left:1px solid #a0a0a0;border-top:1px solid #a0a0a0;background:#fff;"></div>
<div style="position:absolute;left:497px;top:463px;width:17px;height:13px;background:#ececec;border:1px solid #e4e4e4;box-sizing:border-box;"></div>
<svg style="position:absolute;left:501px;top:468px" width="8" height="5"><path d="M0 0H8L4 5Z" fill="#000"/></svg>
<div style="position:absolute;left:352px;top:481px;width:240px;height:19px;box-sizing:border-box;border-left:1px solid #ababab;border-top:1px solid #ababab;background:#fff;"></div>
<div style="position:absolute;left:352px;top:501px;width:240px;height:19px;box-sizing:border-box;border-left:1px solid #ababab;border-top:1px solid #ababab;background:#fff;"></div>
<div style="position:absolute;left:352px;top:521px;width:240px;height:19px;box-sizing:border-box;border-left:1px solid #ababab;border-top:1px solid #ababab;background:#fff;"></div>
<div style="position:absolute;left:352px;top:541px;width:240px;height:19px;box-sizing:border-box;border-left:1px solid #ababab;border-top:1px solid #ababab;background:#fff;"></div>
<div style="position:absolute;left:352px;top:561px;width:240px;height:19px;box-sizing:border-box;border-left:1px solid #ababab;border-top:1px solid #ababab;background:#fff;"></div>
<div style="position:absolute;left:660px;top:461px;width:240px;height:19px;box-sizing:border-box;border-left:1px solid #ababab;border-top:1px solid #ababab;background:#fff;"></div>
<div style="position:absolute;left:660px;top:481px;width:240px;height:19px;box-sizing:border-box;border-left:1px solid #ababab;border-top:1px solid #ababab;background:#fff;"></div>
<div style="position:absolute;left:660px;top:501px;width:240px;height:19px;box-sizing:border-box;border-left:1px solid #ababab;border-top:1px solid #ababab;background:#fff;"></div>
<div style="position:absolute;left:660px;top:521px;width:240px;height:19px;box-sizing:border-box;border-left:1px solid #ababab;border-top:1px solid #ababab;background:#fff;"></div>
<div style="position:absolute;left:660px;top:541px;width:240px;height:19px;box-sizing:border-box;border-left:1px solid #ababab;border-top:1px solid #ababab;background:#fff;"></div>
<div style="position:absolute;left:660px;top:561px;width:240px;height:19px;box-sizing:border-box;border-left:1px solid #ababab;border-top:1px solid #ababab;background:#fff;"></div>
<div style="position:absolute;left:352px;top:597px;width:548px;height:48px;box-sizing:border-box;border-left:1px solid #ababab;border-top:1px solid #ababab;background:#fff;"></div>
<div style="position:absolute;left:883px;top:599px;width:16px;height:45px;background:#f0f0f0;"></div>
<svg style="position:absolute;left:888px;top:607px" width="7" height="4"><path d="M0 4L3.5 0L7 4Z" fill="#9a9a9a"/></svg>
<svg style="position:absolute;left:888px;top:633px" width="7" height="4"><path d="M0 0L3.5 4L7 0Z" fill="#9a9a9a"/></svg>
<svg style="position:absolute;left:907px;top:353px" width="14" height="21" viewBox="0 0 14 21"><path d="M0.5 0.5 V16.5 L4.5 12.5 L7.5 18.5 L9.5 17.5 L6.5 11.5 H11.5 Z" fill="#fff" stroke="#000" stroke-width="1" stroke-linejoin="miter"/></svg>
</body></html>
